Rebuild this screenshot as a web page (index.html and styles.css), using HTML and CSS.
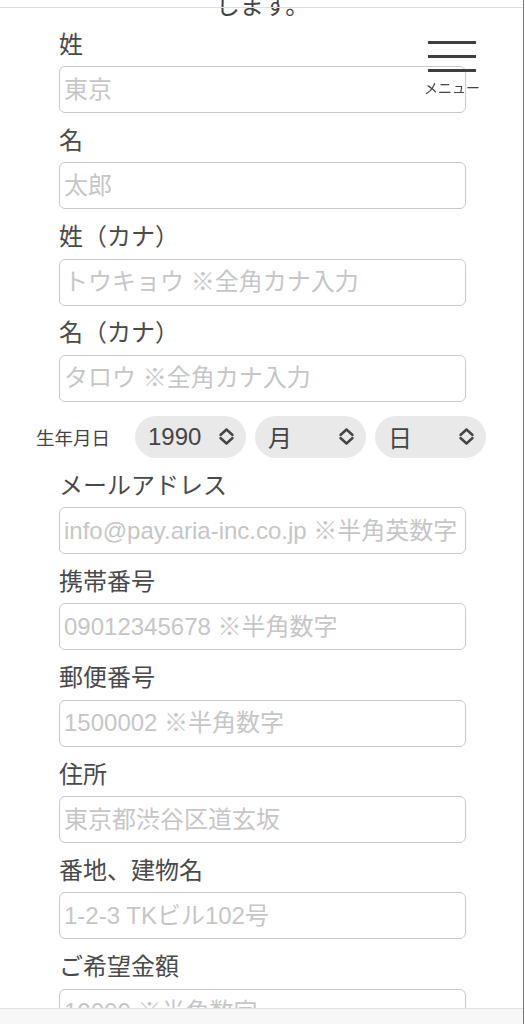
FILE: index.html
```html
<!DOCTYPE html>
<html lang="ja">
<head>
<meta charset="utf-8">
<title>フォーム</title>
<link rel="stylesheet" href="styles.css">
</head>
<body>
<div class="topline"></div>
<div class="edge"></div>
<div class="menu">
  <span class="menu-bar"></span>
  <span class="menu-bar"></span>
  <span class="menu-bar"></span>
  <span class="menu-text">メニュー</span>
</div>

<main class="form">
  <p class="intro">します。</p>

  <div class="field">
    <label class="label">姓</label>
    <input class="input" type="text" placeholder="東京">
  </div>
  <div class="field">
    <label class="label">名</label>
    <input class="input" type="text" placeholder="太郎">
  </div>
  <div class="field">
    <label class="label">姓（カナ）</label>
    <input class="input" type="text" placeholder="トウキョウ ※全角カナ入力">
  </div>
  <div class="field">
    <label class="label">名（カナ）</label>
    <input class="input" type="text" placeholder="タロウ ※全角カナ入力">
  </div>

  <div class="birth">
    <span class="birth-label">生年月日</span>
    <div class="pill"><span>1990</span>
      <svg class="chev" viewBox="0 0 15 17" width="15" height="17"><path d="M1.5 7 L7.5 1.5 L13.5 7 M1.5 10 L7.5 15.5 L13.5 10" fill="none" stroke="#444" stroke-width="2.4" stroke-linecap="round" stroke-linejoin="round"/></svg>
    </div>
    <div class="pill"><span>月</span>
      <svg class="chev" viewBox="0 0 15 17" width="15" height="17"><path d="M1.5 7 L7.5 1.5 L13.5 7 M1.5 10 L7.5 15.5 L13.5 10" fill="none" stroke="#444" stroke-width="2.4" stroke-linecap="round" stroke-linejoin="round"/></svg>
    </div>
    <div class="pill"><span>日</span>
      <svg class="chev" viewBox="0 0 15 17" width="15" height="17"><path d="M1.5 7 L7.5 1.5 L13.5 7 M1.5 10 L7.5 15.5 L13.5 10" fill="none" stroke="#444" stroke-width="2.4" stroke-linecap="round" stroke-linejoin="round"/></svg>
    </div>
  </div>

  <div class="field">
    <label class="label">メールアドレス</label>
    <input class="input" type="text" placeholder="info@pay.aria-inc.co.jp ※半角英数字">
  </div>
  <div class="field">
    <label class="label">携帯番号</label>
    <input class="input" type="text" placeholder="09012345678 ※半角数字">
  </div>
  <div class="field">
    <label class="label">郵便番号</label>
    <input class="input" type="text" placeholder="1500002 ※半角数字">
  </div>
  <div class="field">
    <label class="label">住所</label>
    <input class="input" type="text" placeholder="東京都渋谷区道玄坂">
  </div>
  <div class="field">
    <label class="label">番地、建物名</label>
    <input class="input" type="text" placeholder="1-2-3 TKビル102号">
  </div>
  <div class="field">
    <label class="label">ご希望金額</label>
    <input class="input" type="text" placeholder="10000 ※半角数字">
  </div>
</main>

<div class="bottombar"></div>
</body>
</html>
```

FILE: styles.css
```css
html, body {
  margin: 0;
  padding: 0;
  background: #ffffff;
}

body {
  font-family: "Liberation Sans", "Noto Sans CJK JP", sans-serif;
  color: #444444;
  overflow: hidden;
}

.topline {
  position: fixed;
  top: 7px;
  left: 0;
  right: 2px;
  height: 1px;
  background: #dedede;
  z-index: 5;
}

.edge {
  position: fixed;
  top: 0;
  bottom: 0;
  right: 1px;
  width: 1px;
  background: #7a7a7a;
  z-index: 6;
}

.menu {
  position: fixed;
  top: 41px;
  left: 424px;
  width: 56px;
  display: flex;
  flex-direction: column;
  align-items: center;
  z-index: 5;
}

.menu-bar {
  display: block;
  width: 48px;
  height: 3px;
  background: #3f3f3f;
  margin-bottom: 11px;
}

.menu-text {
  font-family: "Noto Sans CJK JP", sans-serif;
  font-size: 14px;
  line-height: 14px;
  color: #444444;
  margin-top: -3px;
  white-space: nowrap;
}

.form {
  margin: 0 59px;
  padding-bottom: 60px;
}

.intro {
  margin: -8px 0 14.5px;
  font-family: "Noto Sans CJK JP", sans-serif;
  font-size: 24px;
  line-height: 24px;
  text-align: center;
  color: #444444;
}

.field {
  margin-bottom: 13.83px;
}

.label {
  display: block;
  font-family: "Noto Sans CJK JP", sans-serif;
  font-size: 24px;
  line-height: 24px;
  margin-bottom: 11.5px;
  color: #4a4a4a;
}

.input {
  display: block;
  box-sizing: border-box;
  width: 100%;
  height: 47px;
  margin: 0;
  padding: 0 4px;
  border: 1px solid #c9c9c9;
  border-radius: 6px;
  background: #ffffff;
  font-family: "Liberation Sans", "Noto Sans CJK JP", sans-serif;
  font-size: 24px;
  color: #444444;
  outline: none;
}

.input::placeholder {
  color: #c6c6c6;
}

.birth {
  display: flex;
  align-items: center;
  margin: 0 -40px 13.83px -23px;
}

.birth-label {
  flex: none;
  font-family: "Noto Sans CJK JP", sans-serif;
  font-size: 18.5px;
  line-height: 20px;
  width: 74px;
  margin-right: 25px;
  white-space: nowrap;
  color: #444444;
}

.pill {
  flex: none;
  box-sizing: border-box;
  width: 111px;
  height: 42px;
  margin-right: 9px;
  padding: 0 12px 0 13px;
  border-radius: 21px;
  background: #e9e9e9;
  display: flex;
  align-items: center;
  justify-content: space-between;
  font-family: "Liberation Sans", "Noto Sans CJK JP", sans-serif;
  font-size: 24px;
  color: #444444;
}

.chev {
  display: block;
  flex: none;
}

.bottombar {
  position: fixed;
  left: 0;
  right: 0;
  bottom: 0;
  height: 15px;
  border-top: 1px solid #e2e2e2;
  background: #f7f7f7;
  z-index: 4;
}
```
